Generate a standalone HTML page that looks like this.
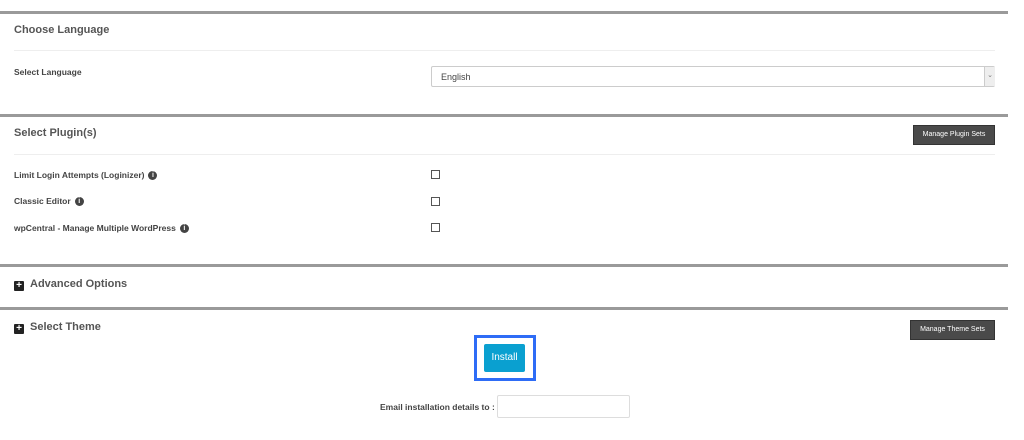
<!DOCTYPE html>
<html><head><meta charset="utf-8"><style>
body{margin:0;width:1024px;height:440px;background:#fff;font-family:"Liberation Sans",sans-serif;color:#333;position:relative;overflow:hidden}
.a{position:absolute}
.hr{position:absolute;left:0;width:1008px;height:3px;background:#9a9a9a}
.thin{position:absolute;left:14px;width:981px;height:1px;background:#eee}
.h{font-size:11px;font-weight:bold;color:#555}
.l{font-size:8.5px;font-weight:bold;color:#444}
.i{display:inline-block;width:9px;height:9px;border-radius:50%;background:#444;color:#fff;font-size:7px;text-align:center;line-height:9px;vertical-align:middle;margin-left:4px;font-style:normal}
.cb{position:absolute;left:431px;width:7px;height:7px;border:1px solid #555;background:#fff}
.btn{position:absolute;background:#4a4a4a;color:#fff;font-size:7px;text-align:center;border:1px solid #333;box-sizing:border-box}
.plus{display:inline-block;width:10px;height:10px;background:#222;border-radius:1px;color:#fff;font-size:10px;line-height:10px;text-align:center;font-weight:bold;vertical-align:-1px;margin-right:6px}
</style></head><body>
<div class="hr" style="top:11px"></div>
<div class="a h" style="left:14px;top:24px">Choose Language</div>
<div class="thin" style="top:50px"></div>
<div class="a l" style="left:14px;top:67px">Select Language</div>
<div class="a" style="left:431px;top:66px;width:564px;height:21px;border:1px solid #ccc;box-sizing:border-box;font-size:9px;color:#444;padding:5px 9px;border-radius:2px">English</div>
<div class="a" style="left:984px;top:67px;width:10px;height:19px;background:#eee;border-left:1px solid #ccc;font-size:7px;color:#777;text-align:center;line-height:17px">&#8964;</div>
<div class="hr" style="top:114px"></div>
<div class="a h" style="left:14px;top:127px">Select Plugin(s)</div>
<div class="btn" style="left:913px;top:125px;width:82px;height:20px;line-height:18px">Manage Plugin Sets</div>
<div class="thin" style="top:154px"></div>
<div class="a l" style="left:14px;top:170px">Limit Login Attempts (Loginizer)<i class="i">i</i></div>
<div class="cb" style="top:170px"></div>
<div class="a l" style="left:14px;top:196px">Classic Editor<i class="i">i</i></div>
<div class="cb" style="top:197px"></div>
<div class="a l" style="left:14px;top:223px">wpCentral - Manage Multiple WordPress<i class="i">i</i></div>
<div class="cb" style="top:223px"></div>
<div class="hr" style="top:264px"></div>
<div class="a h" style="left:14px;top:278px"><span class="plus">+</span>Advanced Options</div>
<div class="hr" style="top:307px"></div>
<div class="a h" style="left:14px;top:321px"><span class="plus">+</span>Select Theme</div>
<div class="btn" style="left:910px;top:320px;width:85px;height:20px;line-height:18px">Manage Theme Sets</div>
<div class="a" style="left:474px;top:335px;width:62px;height:46px;border:3px solid #2e6cf6;box-sizing:border-box"></div>
<div class="a" style="left:484px;top:344px;width:41px;height:28px;background:#0aa0d0;border-radius:2px;color:#fff;font-size:10px;text-align:center;line-height:28px">Install</div>
<div class="a l" style="left:380px;top:402px">Email installation details to :</div>
<div class="a" style="left:497px;top:395px;width:133px;height:23px;border:1px solid #ddd;box-sizing:border-box;border-radius:2px"></div>
</body></html>
